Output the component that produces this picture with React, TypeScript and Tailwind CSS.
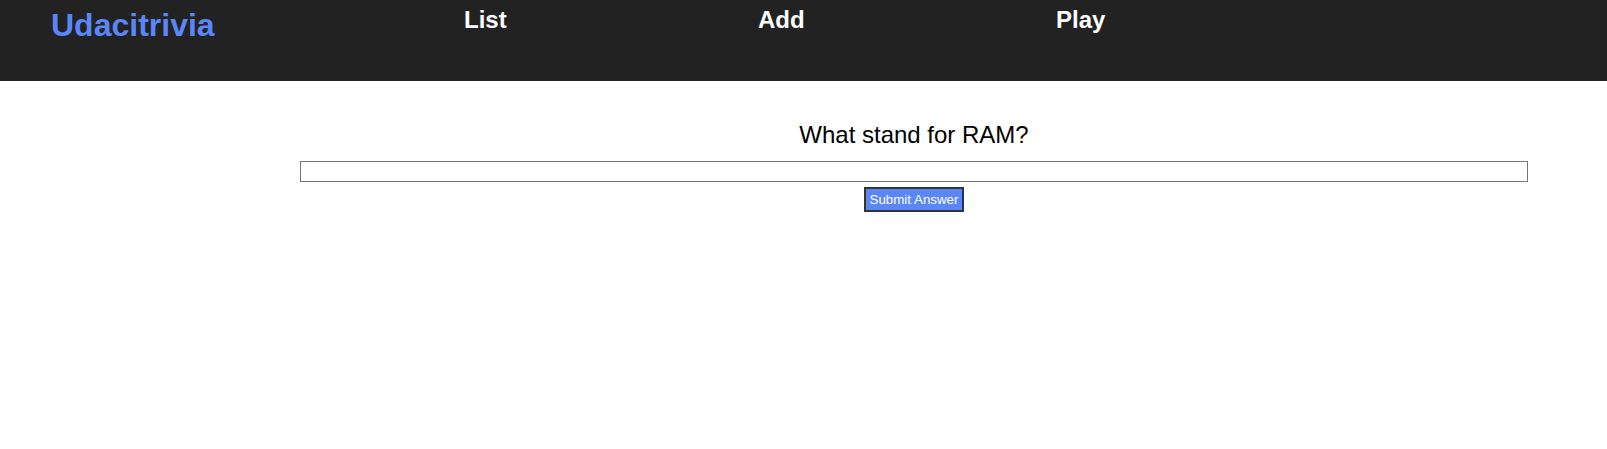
export default function App() {
  const navItems = [
    { label: "List", width: "w-[294px]" },
    { label: "Add", width: "w-[298px]" },
    { label: "Play", width: "w-[120px]" },
  ];

  return (
    <div className="min-h-screen bg-white font-['Liberation_Sans',Arial,sans-serif]">
      {/* Header */}
      <div className="h-[81px] bg-[#222222] flex items-start">
        <div className="w-[464px] pl-[51px] pt-[1px]">
          <h1 className="text-[32px] font-bold text-[#5a86f6] leading-normal">Udacitrivia</h1>
        </div>
        {navItems.map((item) => (
          <div key={item.label} className={`${item.width} pt-[2px]`}>
            <h2 className="text-[24px] font-bold text-white leading-normal">{item.label}</h2>
          </div>
        ))}
      </div>

      {/* Question */}
      <div className="pl-[300px] pr-[79px] pt-[36px] flex flex-col items-center">
        <div className="text-[24px] leading-normal text-black">What stand for RAM?</div>
        <input
          type="text"
          className="mt-[8px] w-full h-[21px] border border-[#767676] bg-white outline-none"
        />
        <button className="mt-[5px] w-[100px] h-[25px] bg-[#5a86f6] text-white text-[13.33px] border-2 border-[#333333] leading-none">
          Submit Answer
        </button>
      </div>
    </div>
  );
}
